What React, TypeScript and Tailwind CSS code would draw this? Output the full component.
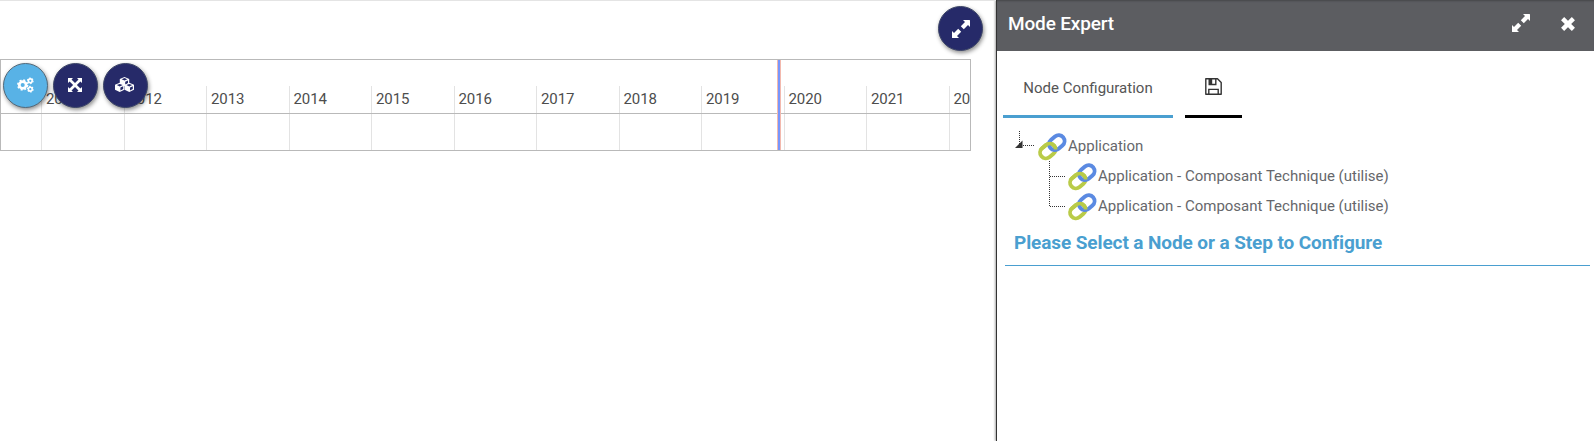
import React from "react";

const years = ["2011", "2012", "2013", "2014", "2015", "2016", "2017", "2018", "2019", "2020", "2021", "2022"];

function ExpandIcon({ className }: { className?: string }) {
  return (
    <svg viewBox="0 0 18 18" className={className} fill="currentColor">
      <path d="M11 0h6.4a.6.6 0 0 1 .6.6V7l-2-2-4.2 4.2-3-3L13 2zM7 18H.6a.6.6 0 0 1-.6-.6V11l2 2 4.2-4.2 3 3L5 16z" />
    </svg>
  );
}

function ArrowsIcon() {
  return (
    <svg viewBox="0 0 14 14" className="mr-px mb-[2px] size-[14px]" fill="currentColor">
      <path d="M0 0h5L3.5 1.6 7 5.1l3.5-3.5L9 0h5v5l-1.6-1.5L8.9 7l3.5 3.5L14 9v5H9l1.5-1.6L7 8.9l-3.5 3.5L5 14H0V9l1.6 1.5L5.1 7 1.6 3.5 0 5z" />
    </svg>
  );
}

function CogsIcon() {
  return (
    <svg viewBox="0 0 17 16" className="mb-[2px] h-4 w-[17px]" fill="none" stroke="currentColor">
      <circle cx="5.7" cy="8" r="3.4" strokeWidth="2.7" />
      <circle cx="5.7" cy="8" r="4.9" strokeWidth="1.6" strokeDasharray="1.95 1.9" />
      <circle cx="13.3" cy="3.8" r="1.9" strokeWidth="1.6" />
      <circle cx="13.3" cy="3.8" r="2.8" strokeWidth="1.1" strokeDasharray="1.5 1.43" />
      <circle cx="13.3" cy="12.2" r="1.9" strokeWidth="1.6" />
      <circle cx="13.3" cy="12.2" r="2.8" strokeWidth="1.1" strokeDasharray="1.5 1.43" />
    </svg>
  );
}

function Cube({ x, y }: { x: number; y: number }) {
  return (
    <g transform={`translate(${x} ${y})`}>
      <path fill="#fff" d="M4.7 0 9.4 2v5L4.7 9.2 0 7V2z" />
      <path fill="#262a69" d="M4.7 1.1 7.6 2.3 4.7 3.6 1.8 2.3zM5.4 4.8l2.8-1.3v2.8L5.4 7.7z" />
    </g>
  );
}

function CubesIcon() {
  return (
    <svg viewBox="0 0 19 15" className="mr-[2px] mb-[2px] h-[15px] w-[19px]">
      <Cube x={4.8} y={0} />
      <Cube x={0} y={5.8} />
      <Cube x={9.6} y={5.8} />
    </svg>
  );
}

function LinkIcon() {
  return (
    <svg viewBox="0 0 30 30" className="size-[30px] shrink-0" fill="none" strokeWidth="3.9">
      <rect x="-8.3" y="-5.8" width="16.6" height="11.6" rx="5.8" stroke="#b9cb48" transform="translate(10.8 20) rotate(-40)" />
      <rect x="-8.3" y="-5.8" width="16.6" height="11.6" rx="5.8" stroke="#5b8ae2" transform="translate(19.8 11.6) rotate(-40)" />
      <svg x="0" y="0" width="30" height="18.5" viewBox="0 0 30 18.5">
        <rect x="-8.3" y="-5.8" width="16.6" height="11.6" rx="5.8" stroke="#b9cb48" transform="translate(10.8 20) rotate(-40)" />
      </svg>
    </svg>
  );
}

function SaveIcon() {
  return (
    <svg viewBox="0 0 17 17" className="size-[17px]" fill="none" stroke="#333" strokeWidth="1.4">
      <path d="M.8.8h11.7l3.7 3.7v11.7H.8z" strokeLinejoin="round" />
      <path d="M3.8 16v-4.6h9.4V16M4.2 1v5.5h6.6V1" />
      <path d="M4.2 1h3v5h-3z" fill="#333" stroke="none" />
    </svg>
  );
}

function RoundButton({ children, light }: { children: React.ReactNode; light?: boolean }) {
  return (
    <button
      className={`flex size-[45px] shrink-0 items-center justify-center rounded-full border text-white shadow-[1px_2px_4px_rgba(0,0,0,0.45)] ${
        light ? "border-[#52697a] bg-[#58b2e6]" : "border-[#3d4668] bg-[#262a69]"
      }`}
    >
      {children}
    </button>
  );
}

function Timeline() {
  return (
    <div className="relative mt-[59px] h-[92px] w-[971px] overflow-hidden border border-[#b9b9b9]">
      <div className="flex h-full w-[1100px] flex-col pl-[40px]">
        <div className="flex h-[53px] shrink-0 items-end">
          {years.map((y) => (
            <div key={y} className="h-[27px] w-[82.5px] shrink-0 border-l border-[#e3e3e3] pl-1 text-[15px] leading-[26px] tracking-[-0.1px] text-[#4d4d4d]">
              {y}
            </div>
          ))}
        </div>
        <div className="-ml-10 h-px shrink-0 bg-[#b9b9b9]" />
        <div className="flex flex-1">
          {years.map((y) => (
            <div key={y} className="w-[82.5px] shrink-0 border-l border-[#e3e3e3]" />
          ))}
        </div>
      </div>
      <div className="absolute top-0 left-[776px] h-full w-1 border-x border-[#f3b9ad] bg-[#7895fb]" />
    </div>
  );
}

function TreeRow({ label }: { label: string }) {
  return (
    <div className="flex h-[30px] items-center">
      <LinkIcon />
      <span className="ml-px">{label}</span>
    </div>
  );
}

export default function App() {
  return (
    <div className="flex h-[441px] w-[1594px] overflow-hidden bg-white font-[Roboto,sans-serif] text-[15px]">
      <main className="relative w-[996px] shrink-0 border-t border-[#e4e4e4]">
        <div className="-mt-px">
          <Timeline />
        </div>
        <div className="absolute top-[62px] left-[3px] flex gap-[5px]">
          <RoundButton light><CogsIcon /></RoundButton>
          <RoundButton><ArrowsIcon /></RoundButton>
          <RoundButton><CubesIcon /></RoundButton>
        </div>
        <div className="absolute top-[5px] left-[938px]">
          <RoundButton><ExpandIcon className="size-[18px]" /></RoundButton>
        </div>
      </main>
      <aside className="flex flex-1 flex-col border-l border-[#333] shadow-[-1px_0_2px_rgba(0,0,0,0.35)]">
        <header className="flex h-[51px] shrink-0 items-center bg-[#5c5d61] pr-[19px] pb-[4px] pl-[11px] text-white shadow-[inset_0_2px_2px_-1px_#46474a]">
          <h1 className="flex-1 pt-px text-[19px] font-medium tracking-[-0.15px]">Mode Expert</h1>
          <ExpandIcon className="mr-[31px] mb-px size-[18px]" />
          <svg viewBox="0 0 14 14" className="size-[14px]" stroke="currentColor" strokeWidth="4.4">
            <path d="m1.6 1.6 10.8 10.8m0-10.8-10.8 10.8" />
          </svg>
        </header>
        <nav className="ml-[6px] flex h-[67px] shrink-0 gap-3">
          <div className="flex w-[170px] items-center justify-center border-b-[3px] border-[#4a9fd0] pt-[10px] text-[#555]">
            Node Configuration
          </div>
          <div className="flex w-[57px] items-center justify-center border-b-[3px] border-black pt-[6px]">
            <SaveIcon />
          </div>
        </nav>
        <div className="mt-[13px] flex pl-[17px] text-[#66676b]">
          <svg viewBox="0 0 23 30" className="h-[30px] w-[23px] shrink-0">
            <path d="M5.5 0v15M9 14.5h12" stroke="#333" strokeDasharray="1 1" fill="none" />
            <path d="M8.5 9.5v7.5H1z" fill="#333" />
          </svg>
          <div className="flex flex-col">
            <TreeRow label="Application" />
            <div className="flex">
              <svg viewBox="0 0 30 60" className="h-[60px] w-[30px] shrink-0">
                <path d="M12.5 0v45.5M13 15.5h15M13 45.5h15" stroke="#333" strokeDasharray="1 1" fill="none" />
              </svg>
              <div>
                <TreeRow label="Application - Composant Technique (utilise)" />
                <TreeRow label="Application - Composant Technique (utilise)" />
              </div>
            </div>
          </div>
        </div>
        <div className="mr-[4px] ml-[8px] flex h-[45px] shrink-0 items-center border-b border-[#4a9fd0] pl-[9px] text-[19px] font-bold tracking-[-0.1px] text-[#4a9fd0]">
          Please Select a Node or a Step to Configure
        </div>
      </aside>
    </div>
  );
}
